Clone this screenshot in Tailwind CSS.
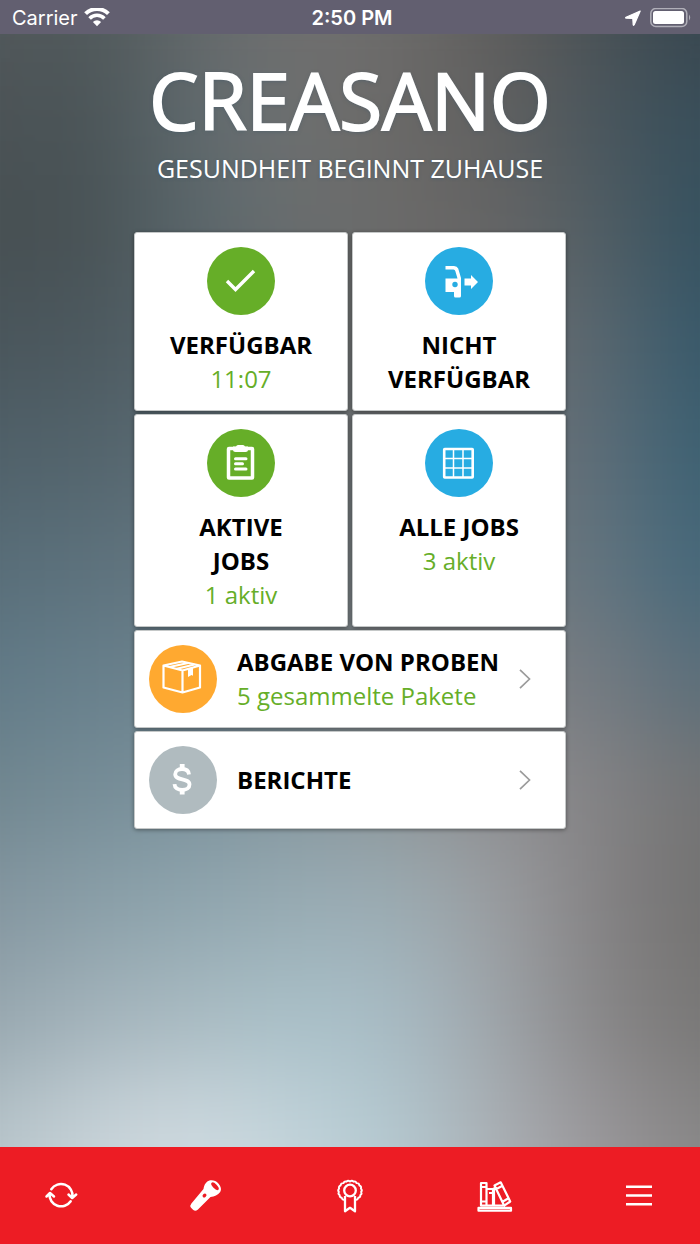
<!DOCTYPE html>
<html lang="de">
<head>
<meta charset="utf-8">
<meta name="viewport" content="width=device-width, initial-scale=1">
<title>Creasano</title>
<script src="https://cdn.jsdelivr.net/npm/@tailwindcss/browser@4"></script>
</head>
<body class="relative isolate flex min-h-screen flex-col overflow-x-hidden bg-[#66757c] font-['Open_Sans',sans-serif]">

  <!-- Soft colour backdrop -->
  <div class="absolute inset-0 -z-10 overflow-hidden" aria-hidden="true">
    <div class="absolute -inset-x-24 -inset-y-12 flex flex-col px-0 blur-[44px]">
      <div class="flex-1 bg-[linear-gradient(90deg,#52585b_10%,#515a5c_22%,#656a6c_33%,#717070_44%,#6d6c6b_55%,#5d5b5a_68%,#495256_78%,#37444d_89%)]"></div>
      <div class="flex-1 bg-[linear-gradient(90deg,#4d5457_10%,#485255_20%,#606b6f_33%,#6f7070_44%,#6a6967_55%,#626160_66%,#4a565d_78%,#374e5a_89%)]"></div>
      <div class="flex-1 bg-[linear-gradient(90deg,#485053_10%,#465053_20%,#5a676c_33%,#6a6e6f_44%,#6b6a69_55%,#656464_66%,#566065_76%,#345160_89%)]"></div>
      <div class="flex-1 bg-[linear-gradient(90deg,#4a565c_10%,#4c595f_22%,#59676e_33%,#686e71_44%,#6c6c6c_55%,#686a6b_66%,#5f6a71_76%,#36586a_89%)]"></div>
      <div class="flex-1 bg-[linear-gradient(90deg,#50616a_10%,#53646c_22%,#5d6d76_33%,#697277_44%,#6e6e6e_55%,#6c6e70_66%,#63707a_76%,#3b6072_89%)]"></div>
      <div class="flex-1 bg-[linear-gradient(90deg,#586d78_10%,#5d727d_22%,#657680_33%,#6f787d_44%,#727475_55%,#70757a_66%,#687780_76%,#44677a_89%)]"></div>
      <div class="flex-1 bg-[linear-gradient(90deg,#617a87_10%,#68808c_22%,#6d838e_33%,#758289_44%,#7d8083_55%,#7f7f82_66%,#767c82_77%,#5a6e7a_89%)]"></div>
      <div class="flex-1 bg-[linear-gradient(90deg,#70868f_10%,#768d98_22%,#7c929c_33%,#85979f_44%,#8e9699_55%,#8f8f92_66%,#848385_78%,#727374_89%)]"></div>
      <div class="flex-1 bg-[linear-gradient(90deg,#83959f_10%,#8a9fa8_22%,#8fa5ae_33%,#98abb3_44%,#9badb4_55%,#9b9c9f_67%,#848284_78%,#727170_89%)]"></div>
      <div class="flex-1 bg-[linear-gradient(90deg,#96a6ae_10%,#a3b3bb_22%,#a8bac1_33%,#a9c0c8_44%,#a7bbc4_55%,#9fa5aa_66%,#878586_78%,#777675_89%)]"></div>
      <div class="flex-1 bg-[linear-gradient(90deg,#b2c0c6_10%,#c6d1d7_22%,#ccd8de_33%,#bfd1d8_44%,#b2c8d0_55%,#aaafb4_66%,#979497_78%,#858484_89%)]"></div>
      <div class="flex-1 bg-[linear-gradient(90deg,#c0cdd2_10%,#d2dce1_22%,#d8e2e7_33%,#cbdae0_44%,#b8ccd4_55%,#b0b4b9_66%,#a09da1_78%,#8e8d8d_89%)]"></div>
    </div>
  </div>

  <!-- Status bar -->
  <div class="grid h-[34px] grid-cols-3 items-center bg-[#625f70] pt-px pr-2 pl-3 font-['Inter',sans-serif] text-xl text-white">
    <div class="flex items-center gap-[6px]">
      <span>Carrier</span>
      <svg class="h-5 w-[26px]" viewBox="0 0 26 20" fill="none" stroke="#fff" aria-label="WLAN">
        <path d="M1.600 5.700a16.200 16.200 0 0 1 22.800 0" stroke-width="4"/>
        <path d="M5.600 10.400a10.400 10.400 0 0 1 14.800 0" stroke-width="3.600"/>
        <path d="M13 18.200l-4.100-4.200a5.800 5.800 0 0 1 8.200 0z" fill="#fff" stroke="none"/>
      </svg>
    </div>
    <div class="text-center font-semibold">2:50 PM</div>
    <div class="flex items-center justify-end gap-[9px]">
      <svg class="h-4 w-4" viewBox="0 0 16 16" fill="#fff" aria-label="Standort"><path d="M15.200 1L9.200 14.800Q8.600 15.800 8.200 14.800L7.800 8.500 1 8.100Q.2 7.700 1 7.200z" stroke="#fff" stroke-width="1.200" stroke-linejoin="round"/></svg>
      <svg class="h-5 w-[42px]" viewBox="0 0 42 20" aria-label="Batterie">
        <rect x=".8" y=".5" width="36" height="18" rx="5" fill="none" stroke="#b0afb8" stroke-width="1.500"/>
        <rect x="3" y="3" width="31" height="13" rx="2.500" fill="#fff"/>
        <path d="M39 6.500q2.400 3 0 6z" fill="#b0afb8"/>
      </svg>
    </div>
  </div>

  <header class="flex flex-col items-center pt-3 text-center text-white">
    <h1 class="text-[78px] leading-[108px] [-webkit-text-stroke:2px_#fff] [text-shadow:0_1px_4px_#42596ab0]">CREASANO</h1>
    <p class="text-[25px] leading-7 [text-shadow:0_1px_3px_#42596ab0]">GESUNDHEIT BEGINNT ZUHAUSE</p>
  </header>

  <main class="mx-auto mt-[50px] grid w-full max-w-[432px] grid-cols-2 gap-x-1 gap-y-[3px] text-2xl leading-[34px] text-[#66ae28]">
    <button class="flex flex-col items-center gap-[13px] rounded-[3px] border border-[#c5c8c8] bg-white px-7 py-[14px] shadow-[0_1px_4px_#0006]">
      <svg class="size-[68px]" viewBox="0 0 68 68" aria-hidden="true"><circle cx="34" cy="34" r="34" fill="#66ae28"/><path d="M20 34l8.500 8.500L47 24" fill="none" stroke="#fff" stroke-width="3.400"/></svg>
      <span><strong class="block text-black">VERFÜGBAR</strong>11:07</span>
    </button>

    <button class="flex flex-col items-center gap-[13px] rounded-[3px] border border-[#c5c8c8] bg-white px-7 py-[14px] shadow-[0_1px_4px_#0006]">
      <svg class="size-[68px]" viewBox="0 0 68 68" aria-hidden="true"><circle cx="34" cy="34" r="34" fill="#27ace2"/>
        <path d="M20.500 19H29q3.200 0 4.200 2.500L36 31V49q0 1.500-1.500 1.500h-4Q29 50.500 29 49v-4h-8.500V31.500h12L30.300 24q-.4-1.500-1.800-1.500h-8z" fill="#fff"/>
        <circle cx="30" cy="37.500" r="2.700" fill="#27ace2"/>
        <path d="M39.500 31.500H46V28l7 7-7 7v-3.500h-6.500z" fill="#fff"/></svg>
      <strong class="text-black">NICHT<br>VERFÜGBAR</strong>
    </button>

    <button class="flex flex-col items-center gap-[13px] rounded-[3px] border border-[#c5c8c8] bg-white px-7 py-[14px] shadow-[0_1px_4px_#0006]">
      <svg class="size-[68px]" viewBox="0 0 68 68" aria-hidden="true"><circle cx="34" cy="34" r="34" fill="#66ae28"/>
        <rect x="21.500" y="19.500" width="24" height="29.500" rx=".5" fill="none" stroke="#fff" stroke-width="3.500"/>
        <path d="M26 17.500h3q.5-1.500 2-1.500h5q1.500 0 2 1.500h3v3q0 2.500-2.500 2.500h-10Q26 23 26 20.500z" fill="#fff"/>
        <path d="M28.500 29.700h10.500M28.500 34.800h7M28.500 40h10.500" stroke="#fff" stroke-width="3" stroke-linecap="round"/></svg>
      <span><strong class="block text-black">AKTIVE<br>JOBS</strong>1 aktiv</span>
    </button>

    <button class="flex flex-col items-center gap-[13px] rounded-[3px] border border-[#c5c8c8] bg-white px-7 py-[14px] shadow-[0_1px_4px_#0006]">
      <svg class="size-[68px]" viewBox="0 0 68 68" fill="none" stroke="#fff" aria-hidden="true"><circle cx="34" cy="34" r="34" fill="#27ace2" stroke="none"/>
        <rect x="19.200" y="20" width="28.500" height="28.500" rx=".5" stroke-width="2.600"/>
        <path d="M28.500 20v28.500M38 20v28.500M19 29.500h29M19 39h29" stroke-width="1.500"/></svg>
      <span><strong class="block text-black">ALLE JOBS</strong>3 aktiv</span>
    </button>

    <button class="col-span-2 flex items-center rounded-[3px] border border-[#c5c8c8] bg-white py-[14px] pr-[34px] pl-[14px] text-left shadow-[0_1px_4px_#0006]">
      <svg class="size-[68px] shrink-0" viewBox="0 0 68 68" fill="none" stroke="#fff" stroke-width="2.200" stroke-linejoin="round" aria-hidden="true"><circle cx="34" cy="34" r="34" fill="#ffa930" stroke="none"/>
        <path d="M14.500 20.500L33 16.500l18 4v22L33.500 47.500l-19-5zM14.500 20.500l19 5 17.500-5M33.500 25.500v22"/>
        <path d="M20.500 22l18.500-4M27 24l18.500-4.500"/>
        <path d="M39 24l5-1.300v8l-1.500-.8-3.500 2z" fill="#fff" stroke="none"/></svg>
      <span class="ml-5 grow"><strong class="block text-black">ABGABE VON PROBEN</strong>5 gesammelte Pakete</span>
      <svg class="h-5 w-3 shrink-0" viewBox="0 0 12 20" fill="none" stroke="#9b9b9b" stroke-width="1.700" aria-hidden="true"><path d="M1 .8L10.500 10 1 19.200"/></svg>
    </button>

    <button class="col-span-2 flex items-center rounded-[3px] border border-[#c5c8c8] bg-white py-[14px] pr-[34px] pl-[14px] text-left shadow-[0_1px_4px_#0006]">
      <svg class="size-[68px] shrink-0" viewBox="0 0 68 68" fill="none" stroke="#fff" aria-hidden="true"><circle cx="34" cy="34" r="34" fill="#b0bbbf" stroke="none"/>
        <path d="M40 28.500c-.3-3.700-3-5.500-7-5.500s-6.800 2-6.800 5.200c0 7 14.300 3.300 14.300 10.300 0 3.500-3 5.500-7.300 5.500s-7.500-2-7.700-5.800" stroke-width="3.800"/>
        <path d="M33.200 18v5M33.200 43.500v5" stroke-width="4.800"/></svg>
      <strong class="ml-5 grow text-black">BERICHTE</strong>
      <svg class="h-5 w-3 shrink-0" viewBox="0 0 12 20" fill="none" stroke="#9b9b9b" stroke-width="1.700" aria-hidden="true"><path d="M1 .8L10.500 10 1 19.200"/></svg>
    </button>
  </main>

  <nav class="mt-auto flex h-[97px] items-center justify-between bg-[#ed1c24] px-10 text-white">
    <button class="flex w-[42px] justify-center" aria-label="Aktualisieren">
      <svg class="size-9" viewBox="0 0 36 36" fill="none" stroke="currentColor" stroke-width="2.500" stroke-linecap="round" stroke-linejoin="round"><path d="M8.300 11.200A11.600 11.600 0 0 1 29.500 19M27.700 23.200A11.600 11.600 0 0 1 6.500 16M25.500 16.500l3.700 3.500 4-3.500M3.500 18.500l3.500-3.500 4 3.500"/></svg>
    </button>
    <button class="flex w-[42px] justify-center" aria-label="Taschenlampe">
      <svg class="size-9" viewBox="0 0 36 36" fill="currentColor"><path d="M15.500 11c.6-4.500 2.900-7.800 5.900-8.600 3.500-.8 6.600.4 9 3 2.600 2.700 3.400 6.200 1.800 8.600-2.300 3.200-5.700 4.600-9.700 5L9.700 31.700q-2.200 2-4.400.4l-2.300-2.300q-1.600-2.200.4-4.400z"/><ellipse cx="27" cy="8.200" rx="4.900" ry="2.100" transform="rotate(46 27 8.200)" fill="#ed1c24"/><ellipse cx="16.500" cy="17.500" rx="2.200" ry="1.700" transform="rotate(-45 16.500 17.500)" fill="#ed1c24"/></svg>
    </button>
    <button class="flex w-[42px] justify-center" aria-label="Auszeichnungen">
      <svg class="size-9" viewBox="0 0 36 36" fill="none" stroke="currentColor" stroke-linejoin="round"><circle cx="18" cy="12.500" r="5.800" stroke-width="2.300"/><path d="M12.300 21.700q-2.200.3-2.600-2-2.300-.3-2-2.600-2-1.300-.8-3.200-1.500-1.800.2-3.300-.8-2.300 1.500-3.100 0-2.400 2.900-2.400.8-2.200 3-1.400 1.500-1.700 3.500-.2 2-1.500 3.500.2 2.200-.8 3 1.400 2.900 0 2.900 2.400 2.300.8 1.500 3.100 1.700 1.500.2 3.300 1.200 1.900-.8 3.200.3 2.300-2 2.600-.4 2.300-2.600 2" stroke-width="1.900"/><path d="M13 18V33.300l5-3.500 5 3.500V18" stroke-width="2.300"/></svg>
    </button>
    <button class="flex w-[42px] justify-center" aria-label="Bibliothek">
      <svg class="size-9" viewBox="0 0 36 36" fill="none" stroke="currentColor" stroke-width="2.200" stroke-linejoin="round"><path d="M1.500 29.800h32.500v2.900h-32.500zM4 5h5.500v22.500H4zM4.500 9h4.500M4.500 23.500h4.500M9.500 11h6.500v16.500H9.500zM12 15h3M17.500 7.500l6.200-3.200 9.500 19.200-6 4.200zM19.500 11l5.500-3M26 23.500l5.500-3.200M17 9.500v18h9"/></svg>
    </button>
    <button class="flex w-[42px] justify-center" aria-label="Menü">
      <svg class="size-9" viewBox="0 0 36 36" stroke="currentColor" stroke-width="2.600"><path d="M5 8.800h26M5 17.500h26M5 26.200h26"/></svg>
    </button>
  </nav>
</body>
</html>
